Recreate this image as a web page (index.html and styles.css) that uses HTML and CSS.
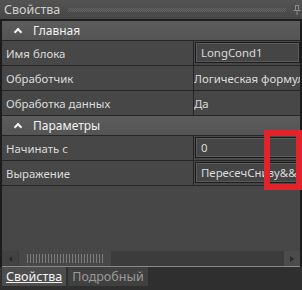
FILE: index.html
```html
<!DOCTYPE html>
<html lang="ru">
<head>
    <meta charset="UTF-8">
    <meta name="viewport" content="width=device-width, initial-scale=1.0">
    <title>Свойства</title>
    <link rel="stylesheet" href="styles.css">
</head>
<body>
    <div class="panel">
        <div class="titlebar">
            <span class="title">Свойства</span>
            <span class="grip"></span>
            <svg class="pin" width="8" height="10" viewBox="0 0 8 10">
                <path d="M2 0.5h4M2.5 0.5v5M5.5 0.5v5M0.5 5.5h7M4 5.5v4.5" stroke="#8c8c8c" stroke-width="1" fill="none"/>
            </svg>
        </div>
        <div class="grid">
            <div class="rows">
                <div class="group"><span class="chev"></span>Главная</div>
                <div class="row">
                    <div class="name">Имя блока</div>
                    <div class="value"><div class="box">LongCond1</div></div>
                </div>
                <div class="row">
                    <div class="name">Обработчик</div>
                    <div class="value">Логическая формула</div>
                </div>
                <div class="row">
                    <div class="name">Обработка данных</div>
                    <div class="value">Да</div>
                </div>
                <div class="group"><span class="chev"></span>Параметры</div>
                <div class="row">
                    <div class="name">Начинать с</div>
                    <div class="value"><div class="box">0</div></div>
                </div>
                <div class="row">
                    <div class="name">Выражение</div>
                    <div class="value"><div class="box">ПересечСнизу&amp;&amp;Рост</div></div>
                </div>
            </div>
            <div class="hscroll">
                <div class="sbtn"><span class="arrow left"></span></div>
                <div class="thumb"><span class="lines"></span></div>
                <div class="track"></div>
                <div class="sbtn right"><span class="arrow rightarrow"></span></div>
            </div>
        </div>
        <div class="tabs">
            <div class="tab active">Свойства</div>
            <div class="tab">Подробный</div>
        </div>
        <div class="highlight"></div>
    </div>
</body>
</html>
```

FILE: styles.css
```css
body {
    margin: 0;
    background-color: #2f2f2f;
    font-family: "Noto Sans", "Open Sans", sans-serif;
    font-size: 11.4px;
    color: #dcdcdc;
}
.panel {
    position: relative;
    width: 302px;
    height: 290px;
    overflow: hidden;
    background-color: #2f2f2f;
}
.titlebar {
    height: 19px;
    display: flex;
    align-items: center;
    padding-left: 4px;
    background: linear-gradient(#535353, #474747);
    border-bottom: 2px solid #1c1c1c;
}
.title {
    font-size: 12.5px;
    color: #d0d0d0;
}
.grip {
    width: 218px;
    height: 4px;
    margin-left: 8px;
    background: repeating-conic-gradient(#666 0 25%, transparent 0 50%) 0 0 / 2px 2px;
}
.pin {
    margin-left: 7px;
}
.grid {
    height: 246px;
    display: flex;
    flex-direction: column;
    border-left: 2px solid #1c1c1c;
    border-right: 2px solid #1c1c1c;
    background-color: #474747;
}
.rows {
    flex: 1;
}
.group {
    height: 19px;
    display: flex;
    align-items: center;
    padding-left: 11px;
    background: linear-gradient(#5c5c5c, #545454);
    border-bottom: 1px solid #262626;
    color: #f2f2f2;
    font-size: 12px;
}
.chev {
    width: 4px;
    height: 4px;
    margin: 3px 12px 0 2px;
    border-left: 2px solid #f2f2f2;
    border-top: 2px solid #f2f2f2;
    transform: rotate(45deg);
}
.row {
    height: 24px;
    display: flex;
    border-bottom: 1px solid #262626;
}
.name {
    width: 187px;
    padding-left: 4px;
    display: flex;
    align-items: center;
    border-right: 1px solid #262626;
}
.value {
    flex: 1;
    min-width: 0;
    display: flex;
    align-items: center;
    white-space: nowrap;
    overflow: hidden;
}
.box {
    align-self: stretch;
    flex: 1;
    min-width: 0;
    margin: 1px 0 2px 1px;
    padding-left: 5px;
    display: flex;
    align-items: center;
    border: 1px solid #1e1e1e;
    box-shadow: inset 0 0 0 1px #5a5a5a;
    background-color: #454545;
}
.hscroll {
    height: 15px;
    display: flex;
    background-color: #3c3c3c;
    border-bottom: 1px solid #8a8a8a;
}
.sbtn {
    width: 16px;
    display: flex;
    align-items: center;
    justify-content: center;
    background-color: #424242;
}
.sbtn.right {
    background-color: #4c4c4c;
}
.arrow {
    width: 0;
    height: 0;
    border-top: 3px solid transparent;
    border-bottom: 3px solid transparent;
}
.arrow.left {
    border-right: 3px solid #2a2a2a;
}
.arrow.rightarrow {
    border-left: 4px solid #2a2a2a;
}
.thumb {
    width: 92px;
    margin-left: 1px;
    display: flex;
    align-items: center;
    justify-content: center;
    background-color: #484848;
}
.lines {
    width: 77px;
    height: 9px;
    background: repeating-linear-gradient(90deg, #7c7c7c 0 1px, transparent 1px 3px);
}
.track {
    flex: 1;
}
.tabs {
    display: flex;
    gap: 2px;
    padding-left: 2px;
    height: 19px;
}
.tab {
    padding: 0 4px;
    display: flex;
    align-items: center;
    font-size: 12.5px;
    background-color: #404040;
    color: #9a9a9a;
}
.tab.active {
    background-color: #4d4d4d;
    color: #f4f4f4;
    text-decoration: underline;
}
.highlight {
    position: absolute;
    left: 264px;
    top: 130px;
    width: 38px;
    height: 60px;
    box-sizing: border-box;
    border: 6px solid #e3232b;
}
```
